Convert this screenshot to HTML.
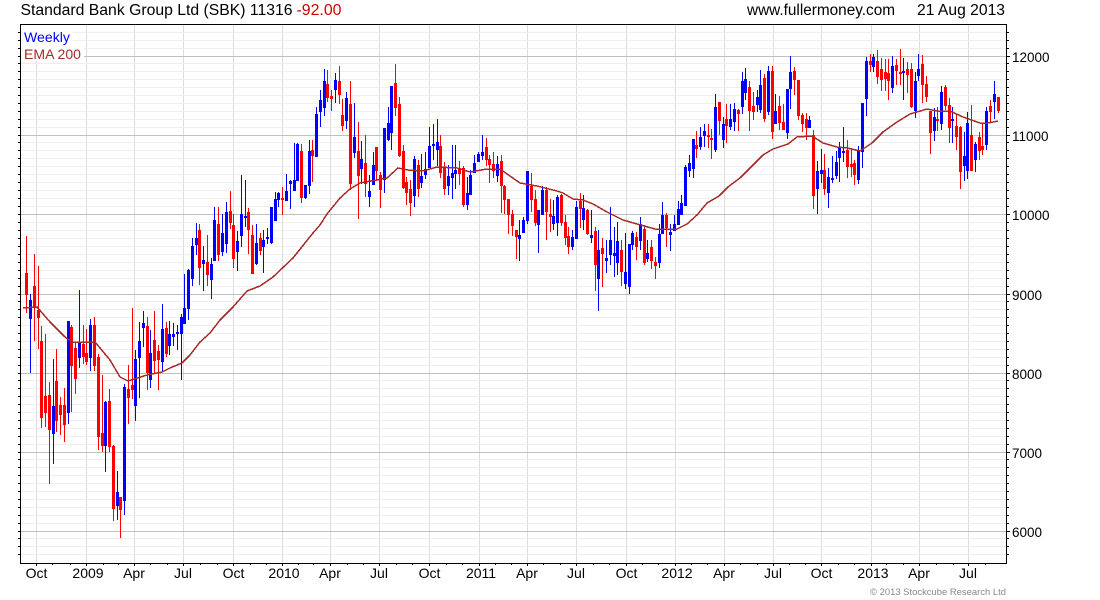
<!DOCTYPE html>
<html><head><meta charset="utf-8"><title>SBK</title>
<style>html,body{margin:0;padding:0;background:#fff;width:1100px;height:600px;overflow:hidden}svg{display:block}text{font-family:"Liberation Sans",Arial,sans-serif}</style></head>
<body>
<svg width="1100" height="600" viewBox="0 0 1100 600" xmlns="http://www.w3.org/2000/svg">
<g shape-rendering="crispEdges" fill="none">
<g transform="translate(.5 0)" stroke="#dcdcdc"><path d="M36 25V563M86 25V563M134 25V563M183 25V563M233 25V563M282 25V563M330 25V563M379 25V563M429 25V563M479 25V563M527 25V563M576 25V563M626 25V563M675 25V563M724 25V563M773 25V563M821 25V563M871 25V563M919 25V563M968 25V563"/></g>
<g transform="translate(0 .5)">
<path stroke="#eeeeee" d="M21 32H1006M21 40H1006M21 48H1006M21 63H1006M21 71H1006M21 79H1006M21 87H1006M21 95H1006M21 103H1006M21 111H1006M21 119H1006M21 127H1006M21 142H1006M21 150H1006M21 158H1006M21 166H1006M21 174H1006M21 182H1006M21 190H1006M21 198H1006M21 206H1006M21 222H1006M21 230H1006M21 238H1006M21 246H1006M21 254H1006M21 262H1006M21 270H1006M21 278H1006M21 286H1006M21 301H1006M21 309H1006M21 317H1006M21 325H1006M21 333H1006M21 341H1006M21 349H1006M21 357H1006M21 365H1006M21 380H1006M21 388H1006M21 396H1006M21 404H1006M21 412H1006M21 420H1006M21 428H1006M21 436H1006M21 444H1006M21 459H1006M21 467H1006M21 475H1006M21 483H1006M21 491H1006M21 499H1006M21 507H1006M21 515H1006M21 523H1006M21 538H1006M21 546H1006M21 554H1006"/>
<path stroke="#c0c0c0" d="M21 56H1006M21 135H1006M21 214H1006M21 294H1006M21 373H1006M21 452H1006M21 531H1006"/>
</g>
<rect x="21" y="25" width="52" height="20" fill="#fff"/><rect x="21" y="45" width="63" height="16" fill="#fff"/>
<g transform="translate(.5 0)">
<path stroke="#00f" d="M30 294V373M53 359V464M68 321V424M79 290V368M90 319V371M105 401V472M117 471V520M124 384V515M135 350V421M139 322V398M143 311V347M150 330V388M162 304V372M169 321V355M173 323V346M177 325V350M181 314V380M184 274V324M188 269V320M192 238V286M196 223V255M203 246V291M211 258V299M214 207V261M222 214V256M226 202V253M237 231V271M241 175V247M245 180V227M256 224V265M263 230V273M267 228V244M271 207V244M275 192V221M278 192V207M286 174V201M290 180V209M294 143V191M297 143V181M305 185V199M309 140V194M316 107V157M320 90V127M324 69V116M335 73V103M346 92V129M354 103V158M361 141V184M369 175V207M373 152V185M384 128V193M388 107V141M391 86V150M414 156V207M421 154V188M425 152V179M429 127V168M433 124V160M437 119V166M448 165V195M452 145V199M455 145V189M467 177V210M470 170V195M474 155V173M478 152V162M482 135V160M497 156V182M519 220V261M523 217V233M527 171V224M538 210V253M542 186V215M553 200V230M557 195V236M572 230V250M576 201V239M583 195V230M591 210V243M598 230V311M606 240V273M610 207V265M614 227V277M617 222V275M625 233V289M629 244V294M632 231V250M640 217V250M647 240V262M659 224V268M662 202V234M670 224V251M674 215V231M678 201V225M681 195V215M685 165V206M689 155V177M693 139V178M700 127V150M704 124V147M715 94V152M723 117V148M730 104V130M734 103V131M742 72V114M745 68V100M757 90V112M760 70V113M768 66V115M775 94V124M787 89V139M790 56V109M809 116V128M817 161V214M821 149V183M828 168V208M832 156V183M836 151V179M839 142V182M843 127V162M858 146V184M862 103V168M866 57V116M873 54V72M892 56V93M903 58V100M915 72V118M918 54V81M934 108V141M941 86V130M952 107V143M964 132V181M967 112V179M975 142V172M986 107V150M994 81V119"/>
<path stroke="#f00" d="M26 236V313M34 254V341M38 266V349M41 326V428M45 334V427M49 382V484M56 349V432M60 397V435M64 388V442M71 325V412M75 342V394M83 325V364M86 329V365M94 317V371M98 354V450M102 375V452M109 389V452M113 445V521M120 497V538M128 365V424M132 308V399M147 317V390M154 311V373M158 345V390M166 322V357M199 224V285M207 235V286M218 207V261M230 191V229M233 214V268M248 208V254M252 225V274M260 233V255M282 187V215M301 144V203M312 140V182M327 70V102M331 90V111M339 66V104M342 99V131M350 81V190M358 122V219M365 135V197M376 147V181M380 172V208M395 64V116M399 97V157M403 145V189M406 177V205M410 180V216M418 160V197M440 135V178M444 162V195M459 161V185M463 166V207M486 138V166M489 155V183M493 152V178M501 155V213M504 185V214M508 199V234M512 210V236M516 230V259M531 173V212M535 190V226M546 187V240M550 199V232M561 194V226M565 215V245M568 227V254M580 193V228M587 209V235M595 227V291M602 238V287M621 240V286M636 232V260M644 225V265M651 240V269M655 257V279M666 213V247M696 131V158M708 124V148M711 129V159M719 102V135M726 104V143M738 109V131M749 81V131M753 92V120M764 74V122M772 66V139M779 96V130M783 104V130M794 67V95M798 80V120M802 113V132M806 113V140M813 130V209M824 154V195M847 140V178M851 148V177M854 160V185M870 54V72M877 50V84M881 58V91M885 59V91M888 59V100M896 59V85M900 49V85M907 62V93M911 63V108M922 55V103M926 76V102M930 111V154M937 107V131M945 85V110M949 98V143M956 114V150M960 126V189M971 105V171M979 132V160M982 123V155M990 100V123M998 97V113"/>
<path stroke="#00f" stroke-width="3" d="M30 300V319M53 406V434M68 321V413M79 343V358M90 325V358M105 402V446M117 492V506M124 387V501M135 359V406M139 341V358M143 323V328M150 353V380M162 329V362M169 334V346M173 334V337M177 332V334M181 317V334M184 308V324M188 270V309M192 246V279M196 238V245M203 260V264M211 264V280M214 220V261M222 233V252M226 212V244M237 241V252M241 214V236M245 216V218M256 243V264M263 240V247M267 237V239M271 207V243M275 199V221M278 193V200M286 191V201M290 181V184M294 180V191M297 144V181M305 185V198M309 151V186M316 114V157M320 100V112M324 81V108M335 80V90M346 98V121M354 137V153M361 159V169M369 191V197M373 165V185M384 128V180M388 123V140M391 86V133M414 159V196M421 176V183M425 169V175M429 146V168M433 144V146M437 142V150M448 176V186M452 173V178M455 170V174M467 193V205M470 175V195M474 163V173M478 154V162M482 152V156M497 164V176M519 235V239M523 220V233M527 171V221M538 210V225M542 190V215M553 216V224M557 197V223M572 237V247M576 207V239M583 208V220M591 235V238M598 250V279M606 258V261M610 240V255M614 253V256M617 241V263M625 272V284M629 244V287M632 233V245M640 224V241M647 253V259M659 234V263M662 215V234M670 232V235M674 224V231M678 209V225M681 203V215M685 167V206M689 163V171M693 139V169M700 137V147M704 131V136M715 107V150M723 124V140M730 119V127M734 109V122M742 81V107M745 79V93M757 97V105M760 85V110M768 71V112M775 111V124M787 89V133M790 72V89M809 120V128M817 171V189M821 170V174M828 177V193M832 178V180M836 162V176M839 148V158M843 151V153M858 150V180M862 103V152M866 61V99M873 57V67M892 66V88M903 71V73M915 81V111M918 69V76M934 117V131M941 92V124M952 119V121M964 156V166M967 123V171M975 144V160M986 111V145M994 94V102"/>
<path stroke="#f00" stroke-width="3" d="M26 273V295M34 286V307M38 310V318M41 341V418M45 396V413M49 395V430M56 381V421M60 405V415M64 405V425M71 327V366M75 348V379M83 344V357M86 353V362M94 325V366M98 357V437M102 433V446M109 401V447M113 446V509M120 497V510M128 389V398M132 385V390M147 326V373M154 340V361M158 351V360M166 328V354M199 230V268M207 262V275M218 224V255M230 211V223M233 225V259M248 212V230M252 235V274M260 238V251M282 198V200M301 151V198M312 150V156M327 84V98M331 96V99M339 81V95M342 115V126M350 104V184M358 151V176M365 163V184M376 147V171M380 175V190M395 83V108M399 104V156M403 151V188M406 182V193M410 189V203M418 165V189M440 146V173M444 167V189M459 168V174M463 168V205M486 147V160M489 159V165M493 164V171M501 161V186M504 186V200M508 199V215M512 214V226M516 230V237M531 186V200M535 199V223M546 190V212M550 214V217M561 195V223M565 222V238M568 236V247M580 201V209M587 210V234M595 231V265M602 248V254M621 250V272M636 237V247M644 229V263M651 247V261M655 262V266M666 215V228M696 145V149M708 135V137M711 138V140M719 102V121M726 119V126M738 110V114M749 87V111M753 106V112M764 78V119M772 71V132M779 106V123M783 122V130M794 71V80M798 80V116M802 115V124M806 119V128M813 135V196M824 170V189M847 150V167M851 164V167M854 163V175M870 61V65M877 61V77M881 69V80M885 72V79M888 73V81M896 65V71M900 72V74M907 69V75M911 69V107M922 64V85M926 84V97M930 111V133M937 119V121M945 87V106M949 105V128M956 126V137M960 127V172M971 135V171M979 137V151M982 146V150M990 106V112M998 97V111"/>
</g>
<polyline stroke="#a52a2a" stroke-width="1.5" points="23,308 37,307 50,322 65,337 72,342 95,342 110,360 120,377 128,381 147,375 162,372 170,368 182,363 190,355 200,342 210,333 220,320 233,307 247,291 260,286 273,277 293,258 313,233 320,225 327,214 340,198 350,189 360,183 387,178 398,168 408,170 423,171 437,167 457,168 470,172 487,169 500,169 510,176 520,183 537,186 557,191 563,193 573,199 583,200 593,204 607,212 623,220 637,224 655,229 677,229 687,224 697,215 707,203 719,196 728,187 740,178 750,168 763,155 773,149 788,144 797,137 812,136 823,143 837,147 847,148 860,151 872,143 883,132 897,122 910,114 927,109 937,111 950,111 963,117 980,123 988,123 998,121"/>
<rect x="20.5" y="24.5" width="986" height="539" stroke="#000"/>
<g transform="translate(0 .5)" stroke="#000">
<path d="M18 32H20M18 40H20M18 48H20M18 56H20M18 63H20M18 71H20M18 79H20M18 87H20M18 95H20M18 103H20M18 111H20M18 119H20M18 127H20M18 135H20M18 142H20M18 150H20M18 158H20M18 166H20M18 174H20M18 182H20M18 190H20M18 198H20M18 206H20M18 214H20M18 222H20M18 230H20M18 238H20M18 246H20M18 254H20M18 262H20M18 270H20M18 278H20M18 286H20M18 294H20M18 301H20M18 309H20M18 317H20M18 325H20M18 333H20M18 341H20M18 349H20M18 357H20M18 365H20M18 373H20M18 380H20M18 388H20M18 396H20M18 404H20M18 412H20M18 420H20M18 428H20M18 436H20M18 444H20M18 452H20M18 459H20M18 467H20M18 475H20M18 483H20M18 491H20M18 499H20M18 507H20M18 515H20M18 523H20M18 531H20M18 538H20M18 546H20M18 554H20"/>
<path d="M1007 32H1009M1007 40H1009M1007 48H1009M1007 56H1010M1007 63H1009M1007 71H1009M1007 79H1009M1007 87H1009M1007 95H1009M1007 103H1009M1007 111H1009M1007 119H1009M1007 127H1009M1007 135H1010M1007 142H1009M1007 150H1009M1007 158H1009M1007 166H1009M1007 174H1009M1007 182H1009M1007 190H1009M1007 198H1009M1007 206H1009M1007 214H1010M1007 222H1009M1007 230H1009M1007 238H1009M1007 246H1009M1007 254H1009M1007 262H1009M1007 270H1009M1007 278H1009M1007 286H1009M1007 294H1010M1007 301H1009M1007 309H1009M1007 317H1009M1007 325H1009M1007 333H1009M1007 341H1009M1007 349H1009M1007 357H1009M1007 365H1009M1007 373H1010M1007 380H1009M1007 388H1009M1007 396H1009M1007 404H1009M1007 412H1009M1007 420H1009M1007 428H1009M1007 436H1009M1007 444H1009M1007 452H1010M1007 459H1009M1007 467H1009M1007 475H1009M1007 483H1009M1007 491H1009M1007 499H1009M1007 507H1009M1007 515H1009M1007 523H1009M1007 531H1010M1007 538H1009M1007 546H1009M1007 554H1009"/>
</g>
<g transform="translate(.5 0)" stroke="#000"><path d="M36 564V566M52 564V565M70 564V565M86 564V566M103 564V565M118 564V565M134 564V566M150 564V565M167 564V565M183 564V566M200 564V565M217 564V565M233 564V566M250 564V565M266 564V565M282 564V566M298 564V565M313 564V565M330 564V566M347 564V565M363 564V565M379 564V566M396 564V565M412 564V565M429 564V566M446 564V565M462 564V565M479 564V566M495 564V565M511 564V565M527 564V566M543 564V565M560 564V565M576 564V566M593 564V565M609 564V565M626 564V566M642 564V565M658 564V565M675 564V566M691 564V565M707 564V565M724 564V566M740 564V565M757 564V565M773 564V566M789 564V565M805 564V565M821 564V566M838 564V565M854 564V565M871 564V566M886 564V565M903 564V565M919 564V566M936 564V565M953 564V565M968 564V566M985 564V565"/></g>
</g>
<text x="20.5" y="15" font-size="15.5" fill="#000" textLength="272" lengthAdjust="spacingAndGlyphs">Standard Bank Group Ltd (SBK) 11316</text>
<text x="296.5" y="15" font-size="15.5" fill="#cc0000" textLength="45" lengthAdjust="spacingAndGlyphs">-92.00</text>
<text x="747" y="15" font-size="15.5" fill="#000" textLength="148" lengthAdjust="spacingAndGlyphs">www.fullermoney.com</text>
<text x="917" y="15" font-size="15.5" fill="#000" textLength="88" lengthAdjust="spacingAndGlyphs">21 Aug 2013</text>
<text x="24" y="42" font-size="14" fill="#0000ff" textLength="46" lengthAdjust="spacingAndGlyphs">Weekly</text>
<text x="24" y="59" font-size="14" fill="#a52a2a" textLength="57" lengthAdjust="spacingAndGlyphs">EMA 200</text>
<g font-size="13.5" fill="#000">
<text x="1012" y="62">12000</text><text x="1012" y="141">11000</text><text x="1012" y="220">10000</text>
<text x="1012" y="300">9000</text><text x="1012" y="379">8000</text><text x="1012" y="458">7000</text><text x="1012" y="537">6000</text>
</g>
<g font-size="14" fill="#000" text-anchor="middle">
<text x="36.5" y="578">Oct</text><text x="88" y="578">2009</text><text x="134" y="578">Apr</text><text x="183" y="578">Jul</text><text x="233.5" y="578">Oct</text><text x="284" y="578">2010</text><text x="330" y="578">Apr</text><text x="379" y="578">Jul</text><text x="429.5" y="578">Oct</text><text x="481" y="578">2011</text><text x="527" y="578">Apr</text><text x="576" y="578">Jul</text><text x="626.5" y="578">Oct</text><text x="677" y="578">2012</text><text x="724" y="578">Apr</text><text x="773" y="578">Jul</text><text x="821.5" y="578">Oct</text><text x="873" y="578">2013</text><text x="919" y="578">Apr</text><text x="968" y="578">Jul</text>
</g>
<text x="870" y="595" font-size="9.5" fill="#888" textLength="136" lengthAdjust="spacingAndGlyphs">© 2013 Stockcube Research Ltd</text>
</svg>
</body></html>
